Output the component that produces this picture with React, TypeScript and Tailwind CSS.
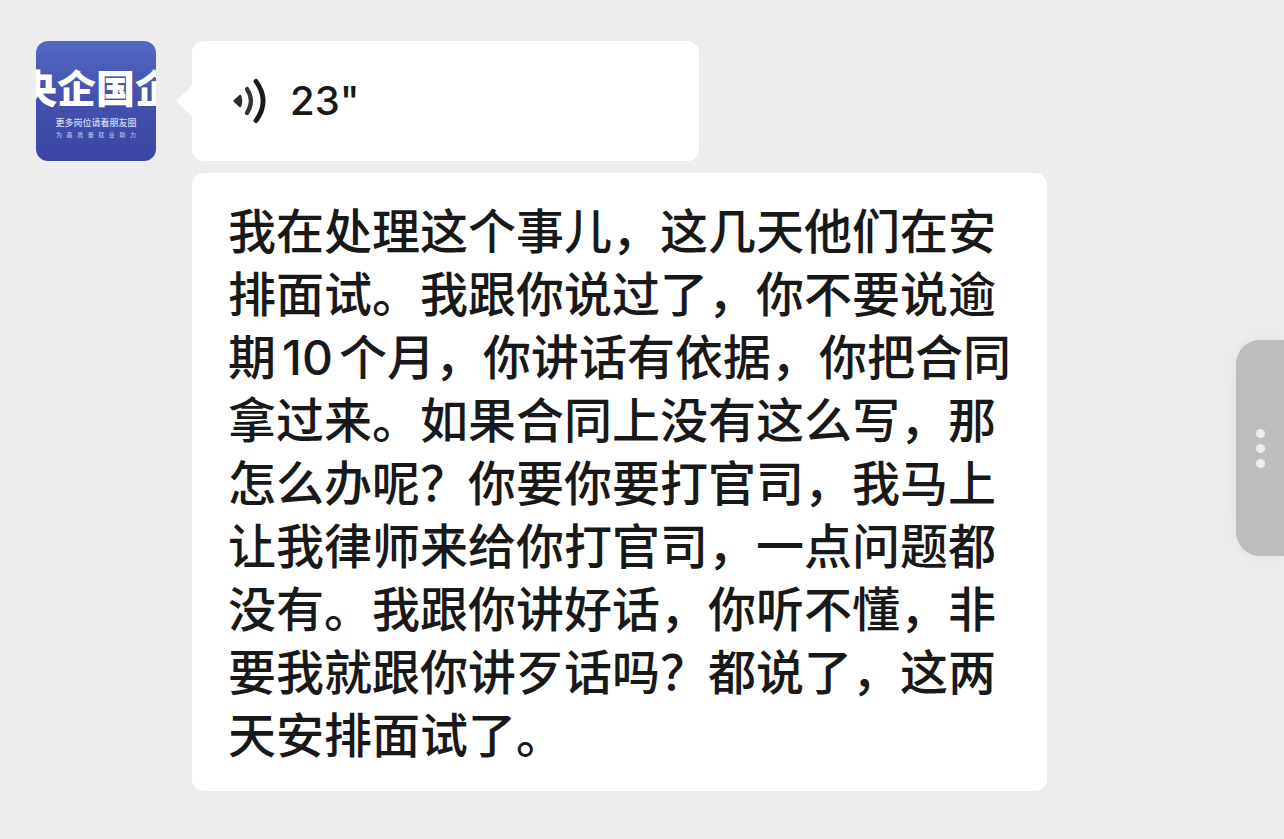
import React from 'react';

const slogan = ['为', '高', '质', '量', '就', '业', '助', '力'];

const message =
  '我在处理这个事儿，这几天他们在安排面试。我跟你说过了，你不要说逾期10个月，你讲话有依据，你把合同拿过来。如果合同上没有这么写，那怎么办呢？你要你要打官司，我马上让我律师来给你打官司，一点问题都没有。我跟你讲好话，你听不懂，非要我就跟你讲歹话吗？都说了，这两天安排面试了。';

const Avatar: React.FC = () => (
  <div className="flex h-[120px] w-[120px] shrink-0 flex-col items-center overflow-hidden rounded-xl bg-linear-to-b from-[#5566c4] via-[#4350ac] to-[#3c46a4] pt-7 text-white">
    <div className="text-[39px] leading-10 font-black whitespace-nowrap">央企国企</div>
    <div className="mt-2 text-[9px] leading-3 font-medium whitespace-nowrap text-[#d3daf4]">更多岗位请看朋友圈</div>
    <div className="flex w-20 justify-between text-[6px] leading-3 font-medium text-[#b4bdea]">
      {slogan.map((char) => (
        <span key={char}>{char}</span>
      ))}
    </div>
  </div>
);

const VoiceIcon: React.FC = () => (
  <svg width="36" height="46" viewBox="0 0 36 46" fill="none" strokeLinecap="round" aria-hidden="true">
    <path d="M1.9 22 7.4 17.1Q8.6 16.2 9.2 17.6Q11.2 23 9.2 28.4Q8.6 29.8 7.4 28.9L1.9 24Q0.9 23 1.9 22Z" fill="#2b2b2b" />
    <path d="M15 11Q22.8 23 15 35" stroke="#333" strokeWidth="4.2" />
    <path d="M24 3.4Q38.2 23 24 42.6" stroke="#191919" strokeWidth="4.8" />
  </svg>
);

const App: React.FC = () => {
  return (
    <main
      lang="zh-CN"
      className="relative min-h-screen bg-[#ededed] pt-[41px] pr-4 pb-12 pl-9 font-['Inter','Noto_Sans_CJK_SC',sans-serif] text-[#191919]"
    >
      <div className="flex items-start gap-9">
        <Avatar />
        <div className="flex min-w-0 flex-1 flex-col gap-3">
          <button
            type="button"
            aria-label='23"'
            className="relative flex h-[120px] w-full max-w-[507px] items-center gap-[22px] rounded-xl bg-white px-10 text-[40px] leading-none font-medium"
          >
            <svg className="absolute top-[42px] -left-4" width="17" height="36" viewBox="0 0 17 36" aria-hidden="true">
              <path d="M17 0Q16 3 13 6L2.2 15.8Q0 18 2.2 20.2L13 30Q16 33 17 36Z" fill="#fff" />
            </svg>
            <VoiceIcon />
            <span>23"</span>
          </button>
          <p className="w-full max-w-[855px] rounded-xl bg-white pt-[27px] pr-8 pb-6 pl-9 text-[48px] leading-[63px] font-medium [text-autospace:normal]">
            {message}
          </p>
        </div>
      </div>

      <button
        type="button"
        aria-label="更多"
        className="absolute top-[340px] right-0 flex h-[216px] w-12 flex-col items-center justify-center gap-[6px] rounded-l-3xl bg-[#bdbdbd] shadow-[0_0_32px_rgba(0,0,0,0.06)]"
      >
        <span className="h-[9px] w-[9px] rounded-full bg-[#ededed]" />
        <span className="h-[9px] w-[9px] rounded-full bg-[#ededed]" />
        <span className="h-[9px] w-[9px] rounded-full bg-[#ededed]" />
      </button>
    </main>
  );
};

export default App;
